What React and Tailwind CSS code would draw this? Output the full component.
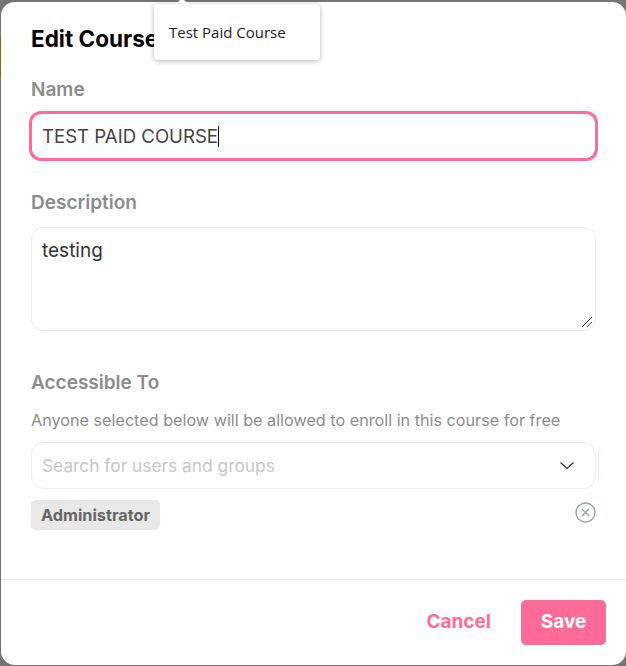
import { useState } from 'react';

const labelClass = 'block text-[19px] leading-[24px] font-semibold text-[#8c8c8c]';

const App = () => {
  const [description, setDescription] = useState('testing');

  return (
    <div className="relative w-[626px] h-[666px] overflow-hidden bg-[#757575] pt-[2px] pl-px pb-px font-['Inter',sans-serif]">
      <div className="absolute left-0 top-[37px] w-px h-[40px] bg-[#8a6a00]" />

      <div className="flex flex-col h-full bg-white rounded-[14px]">
        <div className="flex-1 pl-[30px] pr-[30px]">
          <h2 className="pt-[24px] text-[22.5px] leading-[26px] font-bold text-black">Edit Course</h2>

          <div className="mt-[26px]">
            <label className={labelClass}>Name</label>
            <div className="flex items-center h-[50px] mt-[9px] -mx-[2px] pl-[10px] pr-[12px] pt-[1px] rounded-[12px] border-[3px] border-[#ff6b99] text-[18.6px] text-[#444]">
              <span>TEST PAID COURSE</span>
              <span className="w-px h-[21px] bg-black" />
            </div>
          </div>

          <div className="mt-[30px]">
            <label className={labelClass}>Description</label>
            <div className="relative mt-[12px]">
              <textarea
                value={description}
                onChange={(e) => setDescription(e.target.value)}
                className="block w-full h-[104px] px-[10px] py-[10px] rounded-[12px] border border-[#ededed] text-[19px] leading-[26px] text-[#333] outline-none resize-none"
              />
              <svg width="12" height="12" viewBox="0 0 12 12" stroke="#444" className="absolute right-[3px] bottom-[3px]">
                <path d="M1 11L11 1M6 11l5-5" strokeWidth="1" />
              </svg>
            </div>
          </div>

          <div className="mt-[40px]">
            <label className={labelClass}>Accessible To</label>
            <p className="mt-[14px] text-[16.2px] leading-[22px] text-[#8c8c8c]">
              Anyone selected below will be allowed to enroll in this course for free
            </p>
            <div className="relative flex items-center justify-between h-[47px] mt-[11px] pl-[10px] pr-[21px] rounded-[12px] border border-[#ededed]">
              <span className="text-[17.33px] text-[#c4c8cc]">Search for users and groups</span>
              <svg width="14" height="7" viewBox="0 0 14 7" fill="none" stroke="#333" strokeWidth="1.2">
                <path d="M0.5 0.5L7 6.5L13.5 0.5" />
              </svg>
              <div className="absolute -right-[4px] top-[6px] w-px h-[33px] bg-[#ffe3ec]" />
            </div>
            <div className="flex items-start justify-between mt-[11px]">
              <span className="px-[10px] h-[30px] leading-[30px] rounded-[5px] bg-[#e8e8e8] text-[16.3px] font-bold text-[#666]">
                Administrator
              </span>
              <svg width="21" height="21" viewBox="0 0 21 21" fill="none" stroke="#8fa6b3" className="mt-[2px]">
                <circle cx="10.5" cy="10.5" r="9.5" strokeWidth="1.4" />
                <path d="M7 7l7 7M14 7l-7 7" strokeWidth="1.4" />
              </svg>
            </div>
          </div>
        </div>

        <div className="flex items-center justify-end gap-[30px] h-[86px] pr-[20px] border-t border-[#ededed]">
          <button className="text-[19px] font-bold text-[#ff6b99]">Cancel</button>
          <button className="w-[85px] h-[45px] rounded-[5px] bg-[#ff6b99] text-[19px] font-bold text-white">Save</button>
        </div>
      </div>

      <div className="absolute left-[154px] top-[4px] w-[166px] h-[56px] flex items-center pl-[15px] bg-white rounded-[4px] shadow-[0_1px_5px_rgba(0,0,0,0.3)] text-[15px] text-[#222] font-['Open_Sans',sans-serif]">
        Test Paid Course
      </div>
      <div className="absolute left-[177px] top-0 w-[10px] h-[10px] rotate-45 bg-white" />
    </div>
  );
};

export default App;
